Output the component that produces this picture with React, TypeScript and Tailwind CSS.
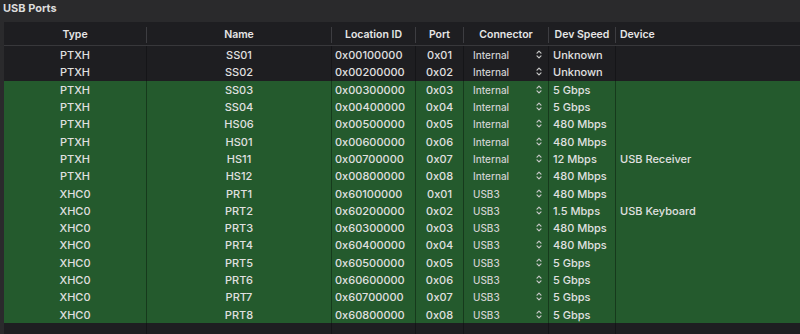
import React from "react";

type Row = { type: string; name: string; loc: string; port: string; conn: string; speed: string; device: string; green: boolean };

const rows: Row[] = [
  { type: "PTXH", name: "SS01", loc: "0x00100000", port: "0x01", conn: "Internal", speed: "Unknown", device: "", green: false },
  { type: "PTXH", name: "SS02", loc: "0x00200000", port: "0x02", conn: "Internal", speed: "Unknown", device: "", green: false },
  { type: "PTXH", name: "SS03", loc: "0x00300000", port: "0x03", conn: "Internal", speed: "5 Gbps", device: "", green: true },
  { type: "PTXH", name: "SS04", loc: "0x00400000", port: "0x04", conn: "Internal", speed: "5 Gbps", device: "", green: true },
  { type: "PTXH", name: "HS06", loc: "0x00500000", port: "0x05", conn: "Internal", speed: "480 Mbps", device: "", green: true },
  { type: "PTXH", name: "HS01", loc: "0x00600000", port: "0x06", conn: "Internal", speed: "480 Mbps", device: "", green: true },
  { type: "PTXH", name: "HS11", loc: "0x00700000", port: "0x07", conn: "Internal", speed: "12 Mbps", device: "USB Receiver", green: true },
  { type: "PTXH", name: "HS12", loc: "0x00800000", port: "0x08", conn: "Internal", speed: "480 Mbps", device: "", green: true },
  { type: "XHC0", name: "PRT1", loc: "0x60100000", port: "0x01", conn: "USB3", speed: "480 Mbps", device: "", green: true },
  { type: "XHC0", name: "PRT2", loc: "0x60200000", port: "0x02", conn: "USB3", speed: "1.5 Mbps", device: "USB Keyboard", green: true },
  { type: "XHC0", name: "PRT3", loc: "0x60300000", port: "0x03", conn: "USB3", speed: "480 Mbps", device: "", green: true },
  { type: "XHC0", name: "PRT4", loc: "0x60400000", port: "0x04", conn: "USB3", speed: "480 Mbps", device: "", green: true },
  { type: "XHC0", name: "PRT5", loc: "0x60500000", port: "0x05", conn: "USB3", speed: "5 Gbps", device: "", green: true },
  { type: "XHC0", name: "PRT6", loc: "0x60600000", port: "0x06", conn: "USB3", speed: "5 Gbps", device: "", green: true },
  { type: "XHC0", name: "PRT7", loc: "0x60700000", port: "0x07", conn: "USB3", speed: "5 Gbps", device: "", green: true },
  { type: "XHC0", name: "PRT8", loc: "0x60800000", port: "0x08", conn: "USB3", speed: "5 Gbps", device: "", green: true },
];

function Arrows() {
  return (
    <svg width="6" height="9" viewBox="0 0 6 9" fill="none" stroke="#c8c8c8" strokeWidth="1.2" strokeLinecap="round" strokeLinejoin="round">
      <path d="M1 3.2 L3 1.2 L5 3.2" />
      <path d="M1 5.8 L3 7.8 L5 5.8" />
    </svg>
  );
}

function HeaderSep() {
  return <div className="w-px h-[16px] bg-[#3d3d41] self-center" />;
}

export default function App() {
  return (
    <div
      className="w-[800px] h-[334px] bg-[#2a2a2c] overflow-hidden flex flex-col text-[#e0e0e0]"
      style={{ fontFamily: "Inter, 'Liberation Sans', sans-serif" }}
    >
      <div className="h-[22px] pl-[3px] pt-[1px] text-[11px] font-bold text-[#dcdcdc] leading-[14px]">USB Ports</div>
      <div className="ml-[4px] flex-1 bg-[#1e1e21] flex flex-col">
        <div className="h-[24px] pt-[2px] flex items-stretch text-[10.5px] font-semibold text-[#e6e6e6] border-b border-[#38383b]">
          <div className="w-[142px] flex items-center justify-center">Type</div>
          <HeaderSep />
          <div className="w-[184px] flex items-center justify-center">Name</div>
          <HeaderSep />
          <div className="w-[83px] flex items-center justify-center">Location ID</div>
          <HeaderSep />
          <div className="w-[47px] flex items-center justify-center">Port</div>
          <HeaderSep />
          <div className="w-[84px] flex items-center justify-center">Connector</div>
          <HeaderSep />
          <div className="w-[66px] flex items-center justify-center">Dev Speed</div>
          <HeaderSep />
          <div className="flex-1 flex items-center pl-[4px]">Device</div>
        </div>
        {rows.map((r, i) => {
          const sep = r.green ? "border-[#163a1c]" : "border-[#151518]";
          return (
            <div
              key={i}
              className={`h-[17.3px] flex items-stretch text-[11px] font-medium leading-none ${r.green ? "bg-[#245a2d]" : ""}`}
            >
              <div className={`w-[143px] flex items-center justify-center pt-[2px] border-r ${sep}`}>{r.type}</div>
              <div className={`w-[185px] flex items-center justify-center pt-[2px] border-r ${sep}`}>{r.name}</div>
              <div className={`w-[84px] flex items-center pl-[3px] pt-[2px] border-r ${sep}`}>{r.loc}</div>
              <div className={`w-[48px] flex items-center justify-center pt-[2px] border-r ${sep}`}>{r.port}</div>
              <div className={`w-[85px] flex items-center pl-[9px] pr-[6px] justify-between border-r ${sep} text-[10px] text-[#d0d0d0]`}>
                <span className="pt-[1px]">{r.conn}</span>
                <Arrows />
              </div>
              <div className={`w-[67px] flex items-center pl-[4px] pt-[2px] border-r ${sep}`}>{r.speed}</div>
              <div className="flex-1 flex items-center pl-[4px] pt-[2px]">{r.device}</div>
            </div>
          );
        })}
        <div className="flex-1 flex">
          <div className="w-[143px] border-r border-[#151518]" />
          <div className="w-[185px] border-r border-[#151518]" />
          <div className="w-[84px] border-r border-[#151518]" />
          <div className="w-[48px] border-r border-[#151518]" />
          <div className="w-[85px] border-r border-[#151518]" />
          <div className="w-[67px] border-r border-[#151518]" />
          <div className="flex-1" />
        </div>
      </div>
    </div>
  );
}
